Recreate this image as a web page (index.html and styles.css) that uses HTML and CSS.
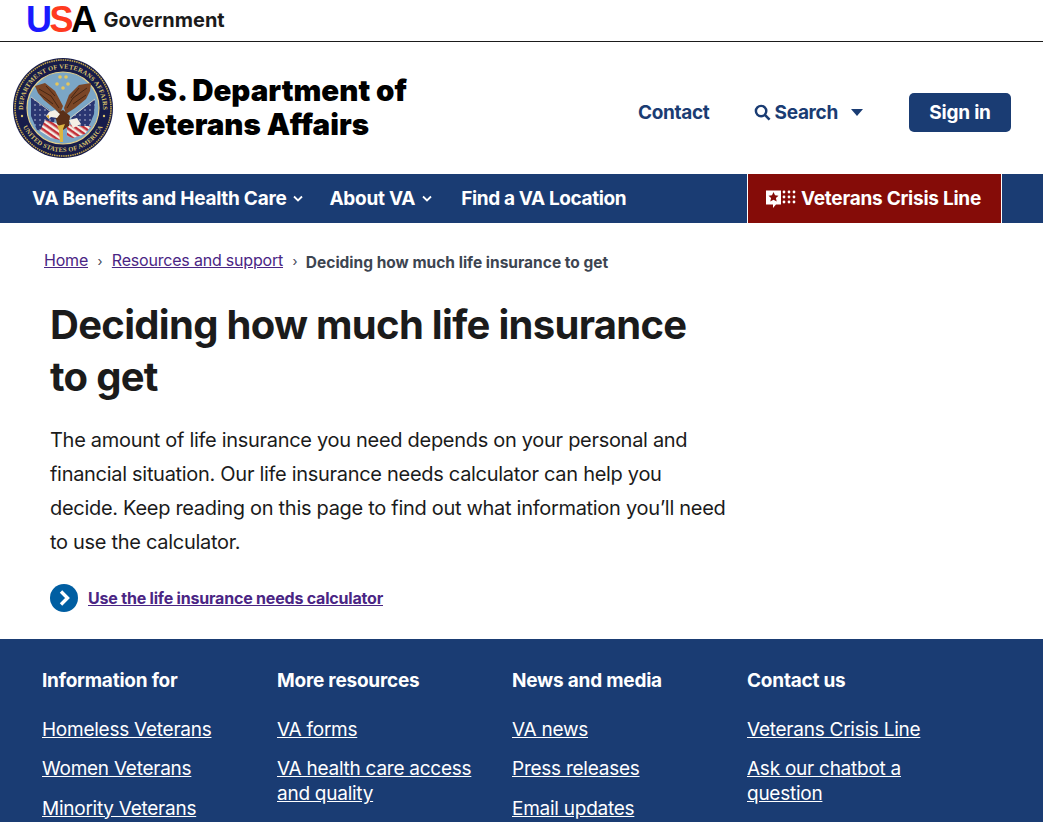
FILE: index.html
```html
<!DOCTYPE html>
<html>
  <head>
    <title>Deciding how much life insurance to get | Veterans Affairs</title>
    <link rel="stylesheet" href="styles.css">
  </head>
  <body>
    <div class="gov-bar">
      <div class="usa"><span class="usa-u">U</span><span class="usa-s">S</span><span class="usa-a">A</span></div>
      <div class="gov-word">Government</div>
    </div>

    <header class="masthead">
      <a class="brand" href="#">
        <svg class="seal" viewBox="0 0 100 100" width="100" height="100">
          <defs>
            <path id="arc-top" d="M12.300 64a40 40 0 1 1 75.400 0"/>
            <path id="arc-bottom" d="M6 50a44 44 0 0 0 88 0"/>
            <pattern id="stripes" width="5" height="5" patternUnits="userSpaceOnUse" patternTransform="rotate(35)">
              <rect width="5" height="5" fill="#f3eee6"/>
              <rect width="5" height="2.500" fill="#c32f38"/>
            </pattern>
            <pattern id="flag-stars" width="5" height="5" patternUnits="userSpaceOnUse">
              <rect width="5" height="5" fill="#2a3672"/>
              <circle cx="2" cy="2" r=".7" fill="#dfe3ee"/>
            </pattern>
          </defs>
          <circle cx="50" cy="50" r="50" fill="#171c4a"/>
          <circle cx="50" cy="50" r="48" fill="none" stroke="#c4a64c" stroke-width="1.600" stroke-dasharray="1.500 .8"/>
          <circle cx="50" cy="50" r="36" fill="#7ba6c6" stroke="#e2d08c" stroke-width="1.200"/>
          <text class="seal-text"><textPath href="#arc-top" startOffset="50%" text-anchor="middle">DEPARTMENT OF VETERANS AFFAIRS</textPath></text>
          <text class="seal-text"><textPath href="#arc-bottom" startOffset="50%" text-anchor="middle">UNITED STATES OF AMERICA</textPath></text>
          <circle cx="9" cy="58" r="1.200" fill="#dcc46c"/>
          <circle cx="91" cy="58" r="1.200" fill="#dcc46c"/>
          <path d="M18 39 45 58 34 74 24 72 18 58z" fill="url(#flag-stars)"/>
          <path d="M82 41 58 60 66 72 76 68 81 56z" fill="url(#flag-stars)"/>
          <path d="M32 62 46 66 47 82 38 80 27 73z" fill="url(#stripes)"/>
          <path d="M54 66 66 68 78 68 72 76 60 80 54 78z" fill="url(#stripes)"/>
          <path d="M18 39 46 60M82 41 56 61" stroke="#e6dfc8" stroke-width=".8" fill="none"/>
          <path d="M22 28 32 25 42 33 50 48 47 56 42 51 31 42 25 35z" fill="#7a4526"/>
          <path d="M78 25 66 27 56 37 51 50 53 56 62 50 73 41 77 33z" fill="#7a4526"/>
          <path d="M26 31 38 38 46 50M33 28 42 38M27 36 40 46M74 30 60 40 54 50M66 30 58 40M73 37 60 46" stroke="#3f2212" stroke-width=".9" fill="none"/>
          <path d="M42 56 50 52 57 58 56 68 50 72 44 66z" fill="#5a2f18"/>
          <path d="M33 58 36 54 42 52 47 56 44 60 38 59 36 61z" fill="#f4efe6"/>
          <path d="M33 58 36 57 36 61z" fill="#d9ae3c"/>
          <path d="M56 62 64 60 68 66 60 70z" fill="#f4efe6"/>
          <path d="M44 68 52 66 50 71 50 84 47 84 46 72z" fill="#dcb440"/>
          <g fill="#e6c65c">
            <circle cx="47" cy="19" r="1.800"/>
            <circle cx="53" cy="19" r="1.800"/>
            <circle cx="44" cy="26" r="1.800"/>
            <circle cx="55" cy="26" r="1.800"/>
            <circle cx="50" cy="30" r="1.800"/>
          </g>
        </svg>
        <span class="brand-name">U.S. Department of<br>Veterans Affairs</span>
      </a>
      <div class="utility">
        <a class="util-link contact" href="#">Contact</a>
        <a class="util-link search" href="#">
          <svg class="search-icon" viewBox="0 0 18 18" width="17" height="17"><circle cx="7.500" cy="7.500" r="5.500" fill="none" stroke="#1a3c73" stroke-width="2.600"/><path d="M11.500 11.500 16.500 16.500" stroke="#1a3c73" stroke-width="2.800"/></svg>
          Search
          <svg class="caret" viewBox="0 0 12 7" width="12" height="7"><path d="M0 0h12L6 7z" fill="#1a3c73"/></svg>
        </a>
        <a class="signin" href="#">Sign in</a>
      </div>
    </header>

    <nav class="mainnav">
      <a class="nav-item" href="#">VA Benefits and Health Care
        <svg class="chev" viewBox="0 0 10 7" width="10" height="7"><path d="M1 1.500 5 5.500 9 1.500" fill="none" stroke="#fff" stroke-width="1.800"/></svg>
      </a>
      <a class="nav-item" href="#">About VA
        <svg class="chev" viewBox="0 0 10 7" width="10" height="7"><path d="M1 1.500 5 5.500 9 1.500" fill="none" stroke="#fff" stroke-width="1.800"/></svg>
      </a>
      <a class="nav-item nav-find" href="#">Find a VA Location</a>
      <a class="crisis" href="#">
        <svg class="crisis-icon" viewBox="0 0 30 20" width="30" height="20">
          <path d="M0 1.500h15v14H10l-3 3.500v-3.500H0z" fill="#fff"/>
          <path d="M7.500 3l1.500 3.300 3.500.4-2.600 2.400.8 3.500-3.200-1.800-3.200 1.800.8-3.500L2.500 6.700 6 6.300z" fill="#850c08"/>
          <g fill="#fff">
            <circle cx="18" cy="3" r="1.400"/><circle cx="23" cy="3" r="1.400"/><circle cx="28" cy="3" r="1.400"/>
            <circle cx="18" cy="8" r="1.400"/><circle cx="23" cy="8" r="1.400"/><circle cx="28" cy="8" r="1.400"/>
            <circle cx="18" cy="13" r="1.400"/><circle cx="23" cy="13" r="1.400"/><circle cx="28" cy="13" r="1.400"/>
          </g>
        </svg>
        Veterans Crisis Line
      </a>
    </nav>

    <main class="content">
      <ol class="crumbs">
        <li><a href="#">Home</a></li>
        <li class="sep">›</li>
        <li><a href="#">Resources and support</a></li>
        <li class="sep">›</li>
        <li class="crumb-current">Deciding how much life insurance to get</li>
      </ol>
      <article class="article">
        <h1>Deciding how much life insurance to get</h1>
        <p class="intro">The amount of life insurance you need depends on your personal and financial situation. Our life insurance needs calculator can help you decide. Keep reading on this page to find out what information you’ll need to use the calculator.</p>
        <a class="action" href="#">
          <svg class="action-icon" viewBox="0 0 28 28" width="28" height="28"><circle cx="14" cy="14" r="14" fill="#005ea2"/><path d="M11 7.500 17.500 14 11 20.500" fill="none" stroke="#fff" stroke-width="3.400"/></svg>
          <span>Use the life insurance needs calculator</span>
        </a>
      </article>
    </main>

    <footer class="footer">
      <div class="foot-col">
        <h2>Information for</h2>
        <a href="#">Homeless Veterans</a>
        <a href="#">Women Veterans</a>
        <a href="#">Minority Veterans</a>
      </div>
      <div class="foot-col">
        <h2>More resources</h2>
        <a href="#">VA forms</a>
        <a href="#">VA health care access and quality</a>
      </div>
      <div class="foot-col">
        <h2>News and media</h2>
        <a href="#">VA news</a>
        <a href="#">Press releases</a>
        <a href="#">Email updates</a>
      </div>
      <div class="foot-col">
        <h2>Contact us</h2>
        <a href="#">Veterans Crisis Line</a>
        <a href="#">Ask our chatbot a question</a>
      </div>
    </footer>
  </body>
</html>
```

FILE: styles.css
```css
html {
  height: 100%;
  overflow: hidden;
}
body {
  margin: 0;
  height: 100%;
  overflow: hidden;
  background-color: #fff;
  color: #1b1b1b;
  font-family: Inter, "Liberation Sans", sans-serif;
}
a {
  color: inherit;
}

/* top government bar */
.gov-bar {
  height: 41px;
  box-sizing: content-box;
  border-bottom: 1px solid #1b1b1b;
  display: flex;
  align-items: center;
  padding-left: 26px;
  gap: 9px;
}
.usa {
  font-family: "Liberation Sans", sans-serif;
  font-size: 36px;
  font-weight: 700;
  line-height: 36px;
  letter-spacing: -2.500px;
  display: flex;
  margin-top: -2px;
}
.usa-u {
  color: #1a1aff;
}
.usa-s {
  color: #ff3b1f;
}
.usa-a {
  color: #000;
}
.gov-word {
  font-size: 20px;
  font-weight: 700;
  color: #1b1b1b;
  margin-top: -2px;
}

/* masthead */
.masthead {
  height: 132px;
  display: flex;
  align-items: center;
  justify-content: space-between;
  padding: 0 32px 0 13px;
}
.brand {
  display: flex;
  align-items: center;
  gap: 13px;
  text-decoration: none;
  color: #000;
}
.seal {
  flex: none;
}
.seal-text {
  font-family: "Liberation Serif", serif;
  font-size: 6.500px;
  font-weight: 700;
  letter-spacing: .2px;
  fill: #dcc46c;
}
.brand-name {
  font-size: 29.500px;
  font-weight: 900;
  line-height: 34px;
  margin-bottom: 2px;
}
.utility {
  display: flex;
  align-items: center;
  padding-top: 8px;
}
.util-link {
  color: #1a3c73;
  font-size: 19px;
  font-weight: 700;
  letter-spacing: -.3px;
  text-decoration: none;
  display: flex;
  align-items: center;
}
.search {
  margin-left: 44px;
  gap: 4px;
}
.caret {
  margin-left: 9px;
}
.signin {
  margin-left: 46px;
  width: 102px;
  height: 39px;
  background-color: #1a3c73;
  color: #fff;
  border-radius: 5px;
  font-size: 19px;
  font-weight: 700;
  letter-spacing: -.2px;
  text-decoration: none;
  display: flex;
  align-items: center;
  justify-content: center;
}

/* main nav */
.mainnav {
  height: 49px;
  background-color: #1a3c73;
  display: flex;
  align-items: center;
  padding-left: 32px;
}
.nav-item {
  color: #fff;
  font-size: 19px;
  font-weight: 700;
  letter-spacing: -.27px;
  text-decoration: none;
  display: flex;
  align-items: center;
  gap: 7px;
  margin-right: 26px;
}
.nav-find {
  margin-left: 3px;
  letter-spacing: -.38px;
}
.crisis {
  margin-left: auto;
  margin-right: 41px;
  width: 255px;
  height: 100%;
  box-sizing: border-box;
  border-left: 1px solid #fff;
  border-right: 1px solid #fff;
  background-color: #850c08;
  color: #fff;
  font-size: 19px;
  font-weight: 700;
  letter-spacing: -.25px;
  text-decoration: none;
  display: flex;
  align-items: center;
  padding-left: 18px;
  gap: 5px;
}

/* content */
.content {
  height: 416px;
  padding-left: 44px;
}
.crumbs {
  list-style: none;
  margin: 0;
  padding: 27px 0 0;
  display: flex;
  align-items: baseline;
  font-size: 16px;
  line-height: 20px;
  letter-spacing: -.2px;
  color: #3d4551;
}
.crumbs a {
  color: #4a2584;
}
.sep {
  margin: 0 9.500px;
  font-size: 13px;
}
.crumb-current {
  font-weight: 700;
  font-size: 15.500px;
  letter-spacing: 0;
  margin-left: -1px;
  position: relative;
  top: 2px;
}
.article {
  padding-left: 6px;
  width: 690px;
}
h1 {
  margin: 28px 0 0;
  max-width: 670px;
  font-size: 40px;
  line-height: 52px;
  font-weight: 700;
  letter-spacing: -.7px;
  color: #1b1b1b;
}
.intro {
  margin: 20px 0 0;
  max-width: 680px;
  font-size: 20px;
  line-height: 34px;
  letter-spacing: -.3px;
  color: #1b1b1b;
}
.action {
  margin-top: 25px;
  display: flex;
  align-items: center;
  gap: 10px;
  color: #4a2584;
  font-size: 16px;
  font-weight: 700;
  letter-spacing: -.2px;
}

/* footer */
.footer {
  background-color: #1a3c73;
  color: #fff;
  height: 183px;
  box-sizing: border-box;
  overflow: hidden;
  padding: 30px 0 0 42px;
  display: grid;
  grid-template-columns: repeat(4, 235px);
}
.foot-col h2 {
  margin: 0 0 24px;
  font-size: 19px;
  line-height: 24px;
  font-weight: 700;
  letter-spacing: -.22px;
}
.foot-col a {
  display: block;
  width: 200px;
  font-size: 19px;
  line-height: 25px;
  letter-spacing: -.25px;
  margin-bottom: 14.400px;
}
```
